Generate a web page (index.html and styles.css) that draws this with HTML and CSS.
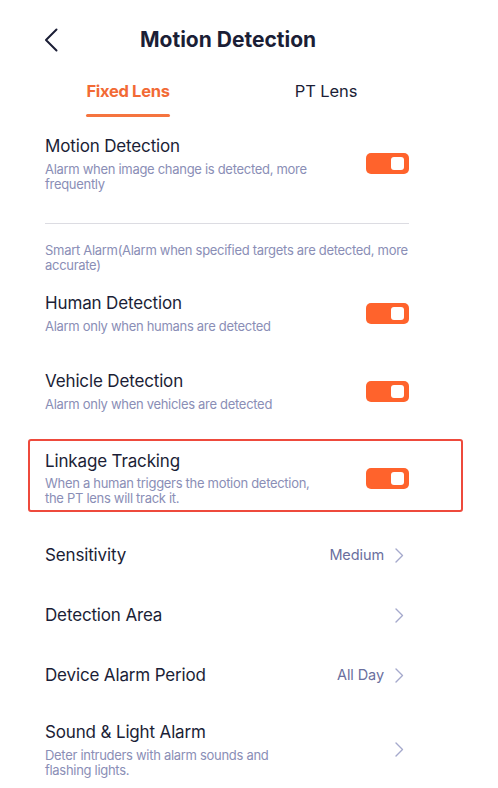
FILE: index.html
```html
<!DOCTYPE html>
<html>
<head>
<meta charset="utf-8">
<link rel="stylesheet" href="styles.css">
</head>
<body>
<div class="page">
  <header class="header">
    <svg class="back" width="14" height="24" viewBox="0 0 14 24"><path d="M12.5 1.5 L2 12 L12.5 22.5" fill="none" stroke="#1b1e36" stroke-width="2" stroke-linecap="round" stroke-linejoin="round"/></svg>
    <h1 class="title">Motion Detection</h1>
  </header>
  <nav class="tabs">
    <div class="tab active"><span class="tab-label">Fixed Lens</span><span class="tab-line"></span></div>
    <div class="tab"><span class="tab-label">PT Lens</span></div>
  </nav>

  <div class="row row-motion">
    <div class="row-text">
      <div class="row-title">Motion Detection</div>
      <div class="row-desc narrow">Alarm when image change is detected, more frequently</div>
    </div>
    <span class="toggle"><span class="knob"></span></span>
  </div>

  <div class="divider"></div>

  <div class="section-note">Smart Alarm(Alarm when specified targets are detected, more accurate)</div>

  <div class="row row-human">
    <div class="row-text">
      <div class="row-title">Human Detection</div>
      <div class="row-desc">Alarm only when humans are detected</div>
    </div>
    <span class="toggle"><span class="knob"></span></span>
  </div>

  <div class="row row-vehicle">
    <div class="row-text">
      <div class="row-title">Vehicle Detection</div>
      <div class="row-desc">Alarm only when vehicles are detected</div>
    </div>
    <span class="toggle"><span class="knob"></span></span>
  </div>

  <div class="highlight">
    <div class="row row-linkage">
      <div class="row-text">
        <div class="row-title">Linkage Tracking</div>
        <div class="row-desc narrow">When a human triggers the motion detection, the PT lens will track it.</div>
      </div>
      <span class="toggle"><span class="knob"></span></span>
    </div>
  </div>

  <div class="nav-row">
    <span class="row-title">Sensitivity</span>
    <span class="nav-right"><span class="value">Medium</span><svg class="chev" width="9" height="15" viewBox="0 0 9 15"><path d="M1 1 L7.5 7.5 L1 14" fill="none" stroke="#a5a9cc" stroke-width="1.4" stroke-linecap="round" stroke-linejoin="round"/></svg></span>
  </div>
  <div class="nav-row">
    <span class="row-title">Detection Area</span>
    <span class="nav-right"><svg class="chev" width="9" height="15" viewBox="0 0 9 15"><path d="M1 1 L7.5 7.5 L1 14" fill="none" stroke="#a5a9cc" stroke-width="1.4" stroke-linecap="round" stroke-linejoin="round"/></svg></span>
  </div>
  <div class="nav-row">
    <span class="row-title">Device Alarm Period</span>
    <span class="nav-right"><span class="value">All Day</span><svg class="chev" width="9" height="15" viewBox="0 0 9 15"><path d="M1 1 L7.5 7.5 L1 14" fill="none" stroke="#a5a9cc" stroke-width="1.4" stroke-linecap="round" stroke-linejoin="round"/></svg></span>
  </div>
  <div class="nav-row nav-tall">
    <div class="row-text">
      <div class="row-title">Sound &amp; Light Alarm</div>
      <div class="row-desc narrow">Deter intruders with alarm sounds and flashing lights.</div>
    </div>
    <span class="nav-right"><svg class="chev" width="9" height="15" viewBox="0 0 9 15"><path d="M1 1 L7.5 7.5 L1 14" fill="none" stroke="#a5a9cc" stroke-width="1.4" stroke-linecap="round" stroke-linejoin="round"/></svg></span>
  </div>
</div>
</body>
</html>
```

FILE: styles.css
```css
* { box-sizing: border-box; }
html, body { margin: 0; padding: 0; background: #fff; }
body {
  font-family: Inter, "Noto Sans", sans-serif;
  color: #1b1e36;
  width: 498px;
  height: 788px;
  overflow: hidden;
}
.page { width: 498px; }

.header {
  height: 80px;
  display: flex;
  align-items: center;
  padding-left: 44px;
}
.back { display: block; flex: none; }
.title {
  margin: 0 0 0 82px;
  font-size: 21px;
  font-weight: 700;
  line-height: 28px;
  color: #1b1e36;
}

.tabs {
  display: grid;
  grid-template-columns: 198px 198px;
  padding-left: 29px;
}
.tab {
  display: flex;
  flex-direction: column;
  align-items: center;
}
.tab-label {
  font-size: 16.5px;
  line-height: 22px;
  color: #1b1e36;
  letter-spacing: -0.1px;
}
.tab.active .tab-label { color: #f26a35; font-weight: 700; letter-spacing: -0.3px; }
.tab-line {
  margin-top: 12px;
  width: 84px;
  height: 3px;
  border-radius: 2px;
  background: #f5743f;
}

.row {
  display: flex;
  align-items: center;
  justify-content: space-between;
  padding: 0 89px 0 45px;
}
.row-title {
  font-size: 17px;
  line-height: 22px;
  color: #1b1e36;
  letter-spacing: -0.15px;
}
.row-desc {
  margin-top: 5px;
  font-size: 13px;
  line-height: 15px;
  color: #8a8eb6;
  letter-spacing: -0.3px;
}
.row-desc.narrow { max-width: 270px; }

.toggle {
  flex: none;
  width: 43px;
  height: 21px;
  border-radius: 5px;
  background: #ff632c;
  display: flex;
  align-items: center;
  justify-content: flex-end;
  padding-right: 5px;
}
.knob {
  width: 13px;
  height: 13px;
  border-radius: 3px;
  background: #fff;
}

.row-motion { margin-top: 18px; }
.divider {
  margin: 31px 89px 0 45px;
  height: 1px;
  background: #dcdce2;
}
.section-note {
  margin-top: 19px;
  padding: 0 84px 0 45px;
  font-size: 13px;
  line-height: 15px;
  color: #8a8eb6;
  letter-spacing: -0.3px;
}
.row-human { margin-top: 19px; }
.row-vehicle { margin-top: 36px; }

.highlight {
  margin: 27px 35px 0 28px;
  border: 2px solid #ee4a3c;
  border-radius: 3px;
  padding: 9px 0 4px 0;
}
.highlight .row { padding: 0 52px 0 15px; }
.highlight .row-desc { margin-top: 4px; }

.nav-row {
  height: 60px;
  display: flex;
  align-items: center;
  justify-content: space-between;
  padding: 0 94px 0 45px;
}
.highlight + .nav-row { margin-top: 13px; }
.nav-tall { height: auto; padding-top: 16px; }
.nav-right {
  display: flex;
  align-items: center;
  gap: 11px;
}
.value {
  font-size: 14.5px;
  line-height: 20px;
  color: #6a6f9e;
  letter-spacing: -0.1px;
}
.chev { display: block; }
```
